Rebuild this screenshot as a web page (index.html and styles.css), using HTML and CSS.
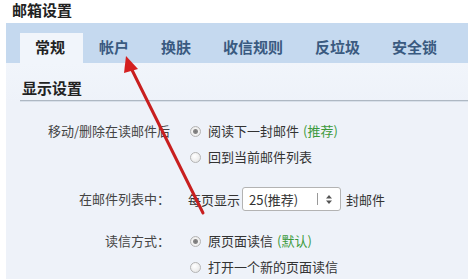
FILE: index.html
```html
<!DOCTYPE html>
<html lang="zh-CN">
<head>
    <meta charset="UTF-8">
    <meta name="viewport" content="width=device-width, initial-scale=1.0">
    <title>邮箱设置</title>
    <link rel="stylesheet" href="styles.css">
</head>
<body>
    <div class="page">
        <div class="title">邮箱设置</div>

        <div class="tabs">
            <div class="tab active">常规</div>
            <div class="tab">帐户</div>
            <div class="tab">换肤</div>
            <div class="tab">收信规则</div>
            <div class="tab">反垃圾</div>
            <div class="tab">安全锁</div>
        </div>

        <div class="content">
            <div class="section-title">显示设置</div>

            <div class="form">
                <div class="field">
                    <div class="label">移动/删除在读邮件后</div>
                    <div class="options">
                        <label class="option"><input type="radio" name="after" checked> 阅读下一封邮件 <span class="hint">(推荐)</span></label>
                        <label class="option"><input type="radio" name="after"> 回到当前邮件列表</label>
                    </div>
                </div>

                <div class="field">
                    <div class="label">在邮件列表中：</div>
                    <div class="inline">
                        每页显示
                        <div class="select">
                            <span class="select-value">25(推荐)</span>
                            <span class="select-sep"></span>
                            <svg class="select-arrows" width="6" height="9" viewBox="0 0 6 9">
                                <path d="M3 0 L6 3.5 L0 3.5 Z M3 9 L6 5.5 L0 5.5 Z" fill="#555"/>
                            </svg>
                        </div>
                        封邮件
                    </div>
                </div>

                <div class="field">
                    <div class="label">读信方式：</div>
                    <div class="options">
                        <label class="option"><input type="radio" name="read" checked> 原页面读信 <span class="hint">(默认)</span></label>
                        <label class="option"><input type="radio" name="read"> 打开一个新的页面读信</label>
                    </div>
                </div>
            </div>
        </div>

        <!-- 标注箭头 -->
        <svg class="arrow" width="468" height="279" viewBox="0 0 468 279">
            <line x1="203" y1="213" x2="131" y2="68" stroke="#c81f1f" stroke-width="3" stroke-linecap="round"/>
            <path d="M126 56 L138 69 L124 73 Z" fill="#d42020"/>
        </svg>
    </div>
</body>
</html>
```

FILE: styles.css
```css
* {
    margin: 0;
    padding: 0;
    box-sizing: border-box;
}

body {
    font-family: "Noto Sans CJK SC", "Noto Sans", sans-serif;
    background: #fff;
    width: 468px;
    height: 279px;
    overflow: hidden;
}

.page {
    position: relative;
    height: 279px;
}

.title {
    height: 23px;
    padding-left: 12px;
    font-size: 15px;
    font-weight: bold;
    line-height: 20px;
    color: #222;
}

.tabs {
    margin-left: 6px;
    height: 40px;
    background: #c5d9ef;
    display: flex;
    align-items: flex-end;
    padding-left: 14px;
}

.tab {
    height: 30px;
    line-height: 28px;
    padding: 0 16px 0 16px;
    font-size: 15px;
    font-weight: bold;
    color: #3a5a80;
}

.tab.active {
    background: #f1f5fb;
    color: #222;
    padding: 0 18px 0 15px;
}

.content {
    margin-left: 6px;
    height: 216px;
    background: linear-gradient(#f1f5fb, #eef2f9 40px);
}

.section-title {
    margin-left: 14px;
    padding: 15px 0 2px 2px;
    font-size: 15px;
    font-weight: bold;
    line-height: 20px;
    color: #222;
    border-bottom: 1px solid #aeb8c3;
    box-shadow: 0 1px 0 #d8e0ea;
}

.form {
    padding-top: 17px;
    font-size: 13px;
    color: #444;
}

.field {
    display: grid;
    grid-template-columns: 164px auto;
    column-gap: 18px;
    margin-bottom: 16px;
}

.label {
    text-align: right;
    line-height: 26px;
}

.options {
    display: flex;
    flex-direction: column;
}

.option {
    display: flex;
    align-items: center;
    line-height: 26px;
    color: #333;
}

.option input {
    appearance: none;
    width: 11px;
    height: 11px;
    margin: 0 7px 0 2px;
    border: 1px solid #b4b4b4;
    border-radius: 50%;
    background: radial-gradient(circle at 40% 35%, #fff, #e2e2e2);
}

.option input:checked {
    background: radial-gradient(circle, #777 0, #888 2px, #f4f4f4 3px, #e0e0e0 100%);
}

.hint {
    color: #3c9a3c;
    margin-left: 4px;
}

.inline {
    display: flex;
    align-items: center;
    height: 26px;
    color: #333;
}

.select {
    display: flex;
    align-items: center;
    width: 99px;
    height: 24px;
    margin: 0 5px 0 2px;
    background: #fff;
    border: 1px solid #b3b3b3;
    border-radius: 3px;
    padding-left: 6px;
}

.select-value {
    width: 68px;
    font-size: 13px;
    color: #333;
}

.select-sep {
    width: 1px;
    height: 12px;
    background: #999;
    margin-right: 8px;
}

.arrow {
    position: absolute;
    left: 0;
    top: 0;
    pointer-events: none;
}
```
